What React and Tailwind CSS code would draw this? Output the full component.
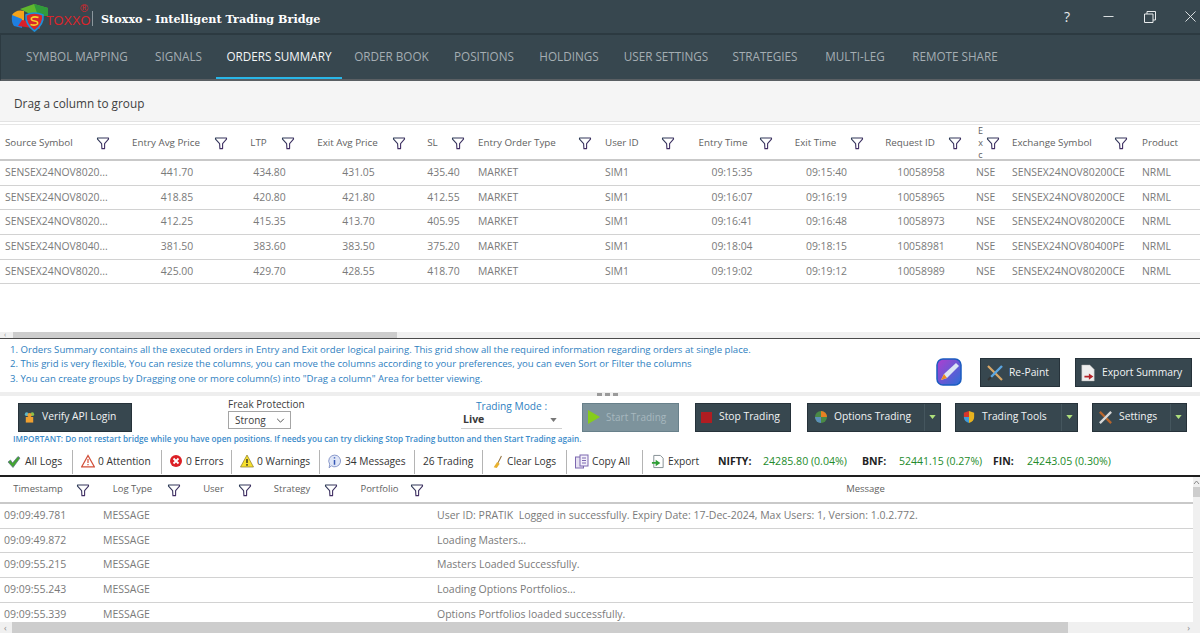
import React from "react";

const Funnel = ({ className = "" }) => (
  <svg viewBox="0 0 14 14" className={`w-[14px] h-[14px] shrink-0 ${className}`}>
    <defs>
      <linearGradient id="fg" x1="0" y1="0" x2="1" y2="1">
        <stop offset="0" stopColor="#2b3a55" />
        <stop offset="1" stopColor="#4a2a6a" />
      </linearGradient>
    </defs>
    <path d="M1.500 2 H12.500 V3.200 L8.600 7.600 V12.600 H5.900 L5.600 7.600 L1.500 3.200 Z" fill="none" stroke="url(#fg)" strokeWidth="1.100" strokeLinejoin="round" />
  </svg>
);

const HeaderCell = ({ label, left, extra = "" }) => (
  <div className={`flex items-center min-w-0 pr-[8px] ${extra}`}>
    <span className={`flex-1 min-w-0 whitespace-nowrap ${left ? "text-left pl-[5px]" : "text-center"}`}>{label}</span>
    <Funnel />
  </div>
);

const orderCols = "grid grid-cols-[118px_118px_67px_111px_59px_127px_83px_98px_91px_98px_37px_129px_64px]";
const logCols = "grid grid-cols-[98px_91px_71px_86px_86px_1fr]";
const orders = [
  ["441.70", "434.80", "431.05", "435.40", "09:15:35", "09:15:40", "10058958", "SENSEX24NOV80200CE", "SENSEX24NOV8020..."],
  ["418.85", "420.80", "421.80", "412.55", "09:16:07", "09:16:19", "10058965", "SENSEX24NOV80200CE", "SENSEX24NOV8020..."],
  ["412.25", "415.35", "413.70", "405.95", "09:16:41", "09:16:48", "10058973", "SENSEX24NOV80200CE", "SENSEX24NOV8020..."],
  ["381.50", "383.60", "383.50", "375.20", "09:18:04", "09:18:15", "10058981", "SENSEX24NOV80400PE", "SENSEX24NOV8040..."],
  ["425.00", "429.70", "428.55", "418.70", "09:19:02", "09:19:12", "10058989", "SENSEX24NOV80200CE", "SENSEX24NOV8020..."],
];
const logs = [
  ["09:09:49.781", "User ID: PRATIK  Logged in successfully. Expiry Date: 17-Dec-2024, Max Users: 1, Version: 1.0.2.772."],
  ["09:09:49.872", "Loading Masters..."],
  ["09:09:55.215", "Masters Loaded Successfully."],
  ["09:09:55.243", "Loading Options Portfolios..."],
  ["09:09:55.339", "Options Portfolios loaded successfully."],
];
const tabs = [
  ["SYMBOL MAPPING", "w-[122px]"],
  ["SIGNALS", "w-[67px] ml-[7px]"],
  ["ORDERS SUMMARY", "w-[126px] ml-[4px]"],
  ["ORDER BOOK", "w-[99px]"],
  ["POSITIONS", "w-[86px]"],
  ["HOLDINGS", "w-[84px]"],
  ["USER SETTINGS", "w-[108px] ml-[1px]"],
  ["STRATEGIES", "w-[90px]"],
  ["MULTI-LEG", "w-[90px]"],
  ["REMOTE SHARE", "w-[110px]"],
];

const Logo = () => (
  <div className="relative w-[80px] h-[33px] shrink-0">
    <svg viewBox="0 0 46 32" className="absolute left-[10px] top-[2px] w-[46px] h-[32px]">
      <path d="M10 7 L24 2 L38 6 V14 L24 14 Z" fill="#5fb82e" />
      <path d="M24 2 L38 6 V14 L28 14 Z" fill="#2f9a3c" />
      <path d="M2 13 Q6 7 14 9 V24 L3 22 Z" fill="#f5a31a" />
      <path d="M2 13 Q1 20 4 24 L12 26 V17 Z" fill="#1f7fe0" />
      <path d="M8 24 L30 27 V21 L12 18 Z" fill="#d8202a" />
      <path d="M16 13 Q24 9 33 13 Q34 22 24.500 29 Q15 22 16 13 Z" fill="#d8262a" stroke="#1e90d8" strokeWidth="1.600" />
      <path d="M28.500 15.500 Q24 14 21.500 16 Q20.500 18.500 24.500 19 Q28.500 19.500 27.500 22 Q25 24 20.500 22.500" fill="none" stroke="#f6d22d" strokeWidth="1.600" />
    </svg>
    <span className="absolute left-[46px] top-[15px] text-[12.800px] leading-[12px] text-[#d9252b] font-['Liberation_Sans',sans-serif]">TOXXO</span>
    <span className="absolute left-[80px] top-[3px] text-[11px] leading-[10px] text-[#d9252b] font-['Liberation_Sans',sans-serif]">®</span>
  </div>
);

const DarkBtn = ({ icon, children, className = "", caret }) => (
  <div className={`h-[29px] bg-[#37474f] border border-[#26323a] text-[#f1f3f4] text-[10.300px] flex items-center shrink-0 ${className}`}>
    <div className="flex-1 flex items-center min-w-0 whitespace-nowrap">{icon}{children}</div>
    {caret && (
      <div className="w-[16px] h-full border-l border-[#45565e] flex items-center justify-center">
        <svg viewBox="0 0 8 5" className="w-[7px] h-[4px]"><path d="M0 0 H8 L4 5 Z" fill="#aee07c" /></svg>
      </div>
    )}
  </div>
);

const Sep = () => <div className="w-px h-[24px] bg-[#b4b4b4] shrink-0" />;

const IconCheck = () => (
  <svg viewBox="0 0 14 14" className="w-[14px] h-[14px]"><path d="M1 7 L3.500 5 L5.500 8 L11 1.500 L13 3 L6 12.500 Z" fill="#43a52f" stroke="#5b6b8a" strokeWidth="0.700" /></svg>
);
const IconAttention = () => (
  <svg viewBox="0 0 14 14" className="w-[14px] h-[14px]"><path d="M7 1.500 L13.300 12.800 H0.700 Z" fill="#fff" stroke="#d2503a" strokeWidth="1.300" /><path d="M7 5 V9 M7 10 V11.300" stroke="#d2503a" strokeWidth="1.200" /></svg>
);
const IconError = () => (
  <svg viewBox="0 0 14 14" className="w-[14px] h-[14px]"><circle cx="7" cy="7" r="6" fill="#dc2026" /><path d="M4.500 4.500 L9.500 9.500 M9.500 4.500 L4.500 9.500" stroke="#fff" strokeWidth="1.800" /></svg>
);
const IconWarn = () => (
  <svg viewBox="0 0 14 14" className="w-[14px] h-[14px]"><path d="M7 1 L13.500 13 H0.500 Z" fill="#f7e02e" stroke="#8a7a2a" strokeWidth="0.700" /><path d="M7 5 V9 M7 10 V11.800" stroke="#222" strokeWidth="1.300" /></svg>
);
const IconInfo = () => (
  <svg viewBox="0 0 14 14" className="w-[15px] h-[15px]"><path d="M7 1 A5.500 5.500 0 1 1 4 11 L2 13 L2.500 9.500 A5.500 5.500 0 0 1 7 1 Z" fill="#dfe6f7" stroke="#7b8bc2" strokeWidth="0.800" /><path d="M7 5.500 V10 M7 3 V4.300" stroke="#3557b5" strokeWidth="1.400" /></svg>
);
const IconBroom = () => (
  <svg viewBox="0 0 14 16" className="w-[12px] h-[16px]"><path d="M11 1 L7 9" stroke="#8d6b36" strokeWidth="1.200" /><path d="M6 8 L9 10 L5.500 15 L2 14 Z" fill="#e8b12f" /></svg>
);
const IconCopy = () => (
  <svg viewBox="0 0 15 15" className="w-[15px] h-[15px]"><rect x="1.500" y="3" width="8" height="11" fill="#e7e2f2" stroke="#7d68b0" /><rect x="6" y="1" width="8" height="11" fill="#f3f0fa" stroke="#7d68b0" /><path d="M8 4 H12 M8 6.500 H12 M8 9 H12" stroke="#7d68b0" /></svg>
);
const IconExport = () => (
  <svg viewBox="0 0 15 15" className="w-[14px] h-[15px]"><path d="M3 1 H10 L13 4 V14 H3 Z" fill="#fff" stroke="#7f8a8f" /><path d="M1 8 H5 V5.500 L10 9 L5 12.500 V10 H1 Z" fill="#2f9e35" /></svg>
);

const Stat = ({ w, icon, text, gap = "gap-[3px]" }) => (
  <div className={`flex items-center shrink-0 ${gap} ${w}`}>
    {icon}
    <span className="whitespace-nowrap">{text}</span>
  </div>
);

export default function App() {
  return (
    <div className="w-[1200px] h-[633px] overflow-hidden flex flex-col bg-white font-['Open_Sans','Noto_Sans',sans-serif] text-[11px]">
      {/* title bar */}
      <div className="h-[33px] bg-[#37474f] flex items-center shrink-0 pr-[4px]">
        <Logo />
        <div className="w-px h-[15px] bg-[#8b979d] ml-[12px] mr-[8px] mt-[3px]" />
        <span className="font-['DejaVu_Serif',serif] font-bold text-white text-[11.200px] mt-[5px] whitespace-nowrap">Stoxxo - Intelligent Trading Bridge</span>
        <div className="flex-1" />
        <span className="text-[#e8ebec] text-[14px] w-[14px] text-center mr-[29px]">?</span>
        <svg viewBox="0 0 12 12" className="w-[11px] h-[11px] mr-[30px]"><path d="M0.500 6 H11.500" stroke="#e8ebec" /></svg>
        <svg viewBox="0 0 12 12" className="w-[12px] h-[12px] mr-[29px]"><path d="M0.500 3 H9 V11.500 H0.500 Z M3 3 V0.500 H11.500 V9 H9" fill="none" stroke="#e8ebec" /></svg>
        <svg viewBox="0 0 12 12" className="w-[11px] h-[11px]"><path d="M0.500 0.500 L11.500 11.500 M11.500 0.500 L0.500 11.500" stroke="#e8ebec" /></svg>
      </div>

      {/* tabs */}
      <div className="h-[48px] bg-[#37474f] border-t-2 border-t-[#2c3a41] border-l border-l-[#2c3a41] border-b-2 border-b-[#5a5f63] flex items-stretch pl-[15px] shrink-0">
        {tabs.map(([t, w]) => (
          <div key={t} className={`${w} flex items-center justify-center whitespace-nowrap text-[11.700px] pt-[2px] border-b-2 ${t === "ORDERS SUMMARY" ? "text-[#f4f6f7] border-[#29b6e8]" : "text-[#a5aeb3] border-transparent"}`}>
            {t}
          </div>
        ))}
      </div>

      {/* group panel */}
      <div className="h-[41px] bg-[#f5f5f5] border-b border-[#e3e3e3] flex items-center pl-[14px] pt-[5px] text-[#3f3f3f] text-[11.800px] shrink-0">
        Drag a column to group
      </div>

      {/* orders grid */}
      <div className="h-[214px] shrink-0 flex flex-col mt-[2px] border-t border-[#e6e6e6]">
        <div className={`${orderCols} h-[36px] items-center text-[#616161] text-[9.800px] border-b-2 border-[#c9c9c9] shrink-0`}>
          <HeaderCell label="Source Symbol" left />
          <HeaderCell label="Entry Avg Price" />
          <HeaderCell label="LTP" />
          <HeaderCell label="Exit Avg Price" />
          <HeaderCell label="SL" />
          <HeaderCell label="Entry Order Type" left />
          <HeaderCell label="User ID" left />
          <HeaderCell label="Entry Time" extra="pl-[4px]" />
          <HeaderCell label="Exit Time" />
          <HeaderCell label="Request ID" />
          <div className="flex items-center pl-[6px]">
            <span className="w-[9px] text-[9px] leading-[12px] text-center">E<br />x<br />c</span>
            <Funnel className="ml-[1px]" />
          </div>
          <HeaderCell label="Exchange Symbol" left />
          <span className="pl-[6px]">Product</span>
        </div>
        {orders.map((r) => (
          <div key={r[6]} className={`${orderCols} h-[24.700px] shrink-0 items-center text-[#7a7a7a] text-[10.400px] border-b border-[#d2d2d2] whitespace-nowrap`}>
            <span className="pl-[5px]">{r[8]}</span>
            <span className="text-center">{r[0]}</span>
            <span className="text-center">{r[1]}</span>
            <span className="text-center">{r[2]}</span>
            <span className="text-center">{r[3]}</span>
            <span className="pl-[5px]">MARKET</span>
            <span className="pl-[5px]">SIM1</span>
            <span className="text-center">{r[4]}</span>
            <span className="text-center">{r[5]}</span>
            <span className="text-center">{r[6]}</span>
            <span className="pl-[6px]">NSE</span>
            <span className="pl-[5px]">{r[7]}</span>
            <span className="pl-[6px]">NRML</span>
          </div>
        ))}
        <div className="flex-1" />
        <div className="h-[6px] bg-[#f0f0f0] flex items-center shrink-0">
          <span className="w-[13px] text-[#8a8a8a] text-[7px] leading-[6px] pl-[4px]">‹</span>
          <div className="w-[384px] h-full bg-[#cdcdcd]" />
        </div>
      </div>

      {/* info panel */}
      <div className="h-[54px] shrink-0 border-t border-[#4a4a4a] flex items-center pl-[10px] pr-[8px]">
        <div className="flex-1 text-[#2f7fbf] text-[9.600px] leading-[14.500px] whitespace-nowrap pb-[2px] font-medium">
          <div>1. Orders Summary contains all the executed orders in Entry and Exit order logical pairing. This grid show all the required information regarding orders at single place.</div>
          <div>2. This grid is very flexible, You can resize the columns, you can move the columns according to your preferences, you can even Sort or Filter the columns</div>
          <div>3. You can create groups by Dragging one or more column(s) into "Drag a column" Area for better viewing.</div>
        </div>
        <svg viewBox="0 0 26 28" className="w-[26px] h-[28px] mr-[18px] mt-[13px] shrink-0">
          <defs>
            <linearGradient id="pen" x1="0" y1="0" x2="1" y2="1">
              <stop offset="0" stopColor="#b03ed0" /><stop offset="1" stopColor="#2a6fd8" />
            </linearGradient>
          </defs>
          <rect x="1" y="1" width="24" height="26" rx="6" fill="url(#pen)" stroke="#1a5cc0" strokeWidth="1.500" />
          <path d="M5 22 L8 16 L20 5 L23 8 L11 20 Z" fill="#dce6f5" />
          <path d="M5 22 L8 16 L11 20 Z" fill="#f08a20" />
        </svg>
        <DarkBtn className="w-[80px] mr-[15px] mt-[14px]" icon={
          <svg viewBox="0 0 18 18" className="w-[18px] h-[18px] ml-[5px] mr-[5px]"><path d="M2 2 L16 16" stroke="#d8a868" strokeWidth="2.200" /><path d="M16 2 L5 13" stroke="#5aa5e0" strokeWidth="2.400" /><path d="M5 13 L2 16" stroke="#333" strokeWidth="2" /></svg>
        }>Re-Paint</DarkBtn>
        <DarkBtn className="w-[117px] mt-[14px]" icon={
          <svg viewBox="0 0 18 20" className="w-[16px] h-[20px] ml-[4px] mr-[6px]"><path d="M2 1 H11 L16 6 V19 H2 Z" fill="#eeeeee" stroke="#aaa" strokeWidth="0.500" /><path d="M5 13 H10 V10.500 L15 14 L10 17.500 V15 H5 Z" fill="#b5232a" /></svg>
        }>Export Summary</DarkBtn>
      </div>

      {/* splitter */}
      <div className="h-[4px] bg-[#eeeeee] flex items-center justify-center gap-[3px] pl-[15px] shrink-0">
        <span className="w-[5px] h-[3px] bg-[#9a9a9a]" /><span className="w-[5px] h-[3px] bg-[#9a9a9a]" /><span className="w-[5px] h-[3px] bg-[#9a9a9a]" />
      </div>

      {/* toolbar */}
      <div className="h-[37px] shrink-0 flex items-center pl-[18px] pt-[5px]">
        <DarkBtn className="w-[114px] mr-[96px]" icon={
          <svg viewBox="0 0 14 14" className="w-[13px] h-[14px] ml-[4px] mr-[6px]"><circle cx="4" cy="4" r="2" fill="#5cb7c9" /><circle cx="10" cy="4" r="2" fill="#8cc04a" /><circle cx="7" cy="5" r="2.300" fill="#f0a030" /><path d="M3 13 V7 H11 V13 Z" fill="#f0a030" /></svg>
        }>Verify API Login</DarkBtn>
        <div className="w-[80px] mr-[153px] flex flex-col mb-[7px]">
          <span className="text-[10px] leading-[13px] text-[#3c3c3c] whitespace-nowrap">Freak Protection</span>
          <div className="w-[63px] h-[18px] border border-[#a5a5a5] flex items-center pl-[6px] text-[10px] text-[#3c3c3c]">
            <span className="flex-1">Strong</span>
            <svg viewBox="0 0 10 6" className="w-[9px] h-[5px] mr-[5px]"><path d="M1 1 L5 5 L9 1" fill="none" stroke="#333" /></svg>
          </div>
        </div>
        <div className="w-[101px] mr-[20px] flex flex-col items-stretch mb-[7px]">
          <span className="text-[10.200px] leading-[14px] text-[#2f7fbf] text-center whitespace-nowrap">Trading Mode :</span>
          <div className="h-[14px] border-b border-[#d0d0d0] flex items-center pl-[2px] box-content pb-[1px]">
            <span className="flex-1 font-bold text-[#3a3a3a] text-[10.500px]">Live</span>
            <svg viewBox="0 0 8 5" className="w-[7px] h-[4px] mr-[5px]"><path d="M0 0 H8 L4 5 Z" fill="#777" /></svg>
          </div>
        </div>
        <div className="w-[97px] h-[29px] mr-[16px] bg-[#7d939c] border border-[#68808a] flex items-center text-[10px] text-[#a7b8bf] whitespace-nowrap">
          <svg viewBox="0 0 12 14" className="w-[12px] h-[14px] ml-[5px] mr-[6px]"><path d="M0 0 L12 7 L0 14 Z" fill="#86cc1c" /></svg>
          Start Trading
        </div>
        <DarkBtn className="w-[96px] mr-[16px]" icon={<span className="w-[11px] h-[11px] bg-[#b01d22] ml-[5px] mr-[7px]" />}>Stop Trading</DarkBtn>
        <DarkBtn className="w-[134px] mr-[14px]" caret icon={
          <svg viewBox="0 0 14 14" className="w-[14px] h-[14px] ml-[6px] mr-[6px]"><circle cx="7" cy="7" r="6" fill="#4a8a46" /><path d="M7 1 A6 6 0 0 1 13 7 H7 Z" fill="#e87f22" /><path d="M1 7 A6 6 0 0 0 7 13 V7 Z" fill="#5b8fb8" /></svg>
        }>Options Trading</DarkBtn>
        <DarkBtn className="w-[123px] mr-[14px]" caret icon={
          <svg viewBox="0 0 14 16" className="w-[12px] h-[14px] ml-[7px] mr-[7px]"><path d="M7 1 L13 3 V8 Q13 13 7 15 Z" fill="#e8b31f" /><path d="M7 1 L1 3 V8 H7 Z" fill="#d8352a" /><path d="M1 8 Q1 13 7 15 V8 Z" fill="#3f9ad8" /></svg>
        }>Trading Tools</DarkBtn>
        <DarkBtn className="w-[95px]" caret icon={
          <svg viewBox="0 0 16 16" className="w-[15px] h-[15px] ml-[5px] mr-[6px]"><path d="M2 2 L14 14" stroke="#b8652c" strokeWidth="2.500" /><path d="M14 2 L2 14" stroke="#d8d8d8" strokeWidth="2.500" /></svg>
        }>Settings</DarkBtn>
      </div>

      {/* important */}
      <div className="h-[14px] shrink-0 pl-[13px] text-[#3b8bca] text-[8.200px] font-semibold leading-[14px] whitespace-nowrap -mt-[1px]">
        IMPORTANT: Do not restart bridge while you have open positions. If needs you can try clicking Stop Trading button and then Start Trading again.
      </div>

      {/* filter bar */}
      <div className="h-[31px] shrink-0 flex items-center pl-[7px] pt-[2px] border-b-2 border-[#1e1e1e] text-[#333] text-[10.200px]">
        <Stat w="w-[65px]" icon={<IconCheck />} text={<span className="text-[10.500px]">All Logs</span>} gap="gap-[4px]" />
        <Sep />
        <div className="w-[8px] shrink-0" />
        <Stat w="w-[80px]" icon={<IconAttention />} text="0 Attention" />
        <Sep />
        <div className="w-[7px] shrink-0" />
        <Stat w="w-[62px]" icon={<IconError />} text="0 Errors" />
        <Sep />
        <div className="w-[8px] shrink-0" />
        <Stat w="w-[79px]" icon={<IconWarn />} text="0 Warnings" />
        <Sep />
        <div className="w-[7px] shrink-0" />
        <Stat w="w-[87px]" icon={<IconInfo />} text="34 Messages" />
        <Sep />
        <div className="w-[8px] shrink-0" />
        <span className="w-[59px] whitespace-nowrap shrink-0">26 Trading</span>
        <Sep />
        <div className="w-[9px] shrink-0" />
        <Stat w="w-[74px]" icon={<IconBroom />} text="Clear Logs" />
        <Sep />
        <div className="w-[7px] shrink-0" />
        <Stat w="w-[68px]" icon={<IconCopy />} text="Copy All" />
        <Sep />
        <div className="w-[8px] shrink-0" />
        <Stat w="w-[67px]" icon={<IconExport />} text="Export" />
        <span className="font-bold text-[10.500px] w-[45px] text-[#222] shrink-0">NIFTY:</span>
        <span className="w-[99px] text-[#238b2a] text-[10.600px] whitespace-nowrap shrink-0">24285.80 (0.04%)</span>
        <span className="font-bold text-[10.500px] w-[37px] text-[#222] shrink-0">BNF:</span>
        <span className="w-[94px] text-[#238b2a] text-[10.500px] whitespace-nowrap shrink-0">52441.15 (0.27%)</span>
        <span className="font-bold text-[10.500px] w-[34px] text-[#222] shrink-0">FIN:</span>
        <span className="text-[#238b2a] text-[10.600px] whitespace-nowrap">24243.05 (0.30%)</span>
      </div>

      {/* log grid */}
      <div className="flex-1 min-h-0 flex flex-col">
        <div className="flex-1 min-h-0 flex overflow-hidden">
          <div className="flex-1 min-w-0 flex flex-col">
            <div className={`${logCols} h-[27px] shrink-0 items-center text-[#616161] text-[9.500px] border-b-2 border-[#c9c9c9]`}>
              <HeaderCell label="Timestamp" />
              <HeaderCell label="Log Type" />
              <HeaderCell label="User" />
              <HeaderCell label="Strategy" />
              <HeaderCell label="Portfolio" extra="pl-[3px]" />
              <span className="text-center pl-[106px]">Message</span>
            </div>
            {logs.map(([t, m]) => (
              <div key={t} className={`${logCols} h-[24.700px] shrink-0 items-center text-[#7a7a7a] text-[10.500px] border-b border-[#d2d2d2] whitespace-pre`}>
                <span className="pl-[4px]">{t}</span>
                <span className="pl-[5px]">MESSAGE</span>
                <span />
                <span />
                <span />
                <span className="pl-[5px]">{m}</span>
              </div>
            ))}
          </div>
          <div className="w-[7px] bg-[#f0f0f0] shrink-0 flex flex-col">
            <svg viewBox="0 0 7 6" className="w-[7px] h-[8px] mt-[2px]"><path d="M1 4 L3.500 1 L6 4" fill="none" stroke="#8a8a8a" /></svg>
            <div className="h-[10px] bg-[#cdcdcd]" />
          </div>
        </div>
        <div className="h-[11px] bg-[#f0f0f0] flex items-center shrink-0">
          <span className="w-[12px] text-[#8a8a8a] text-[9px] leading-[9px] pl-[4px]">‹</span>
          <div className="w-[1056px] h-full bg-[#cdcdcd]" />
          <div className="flex-1" />
          <span className="text-[#8a8a8a] text-[9px] leading-[9px] pr-[10px]">›</span>
        </div>
      </div>
    </div>
  );
}
